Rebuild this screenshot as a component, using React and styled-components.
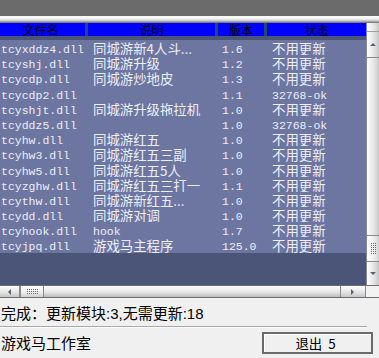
import React from 'react';
import styled, { createGlobalStyle } from 'styled-components';

const GlobalStyle = createGlobalStyle`
  html, body {
    margin: 0;
    padding: 0;
    background: #f0f0f0;
  }
  body {
    font-family: "Liberation Sans", "Noto Sans CJK SC", sans-serif;
  }
`;

const rows = [
  ['tcyxddz4.dll', '同城游新4人斗...', '1.6', '不用更新'],
  ['tcyshj.dll', '同城游升级', '1.2', '不用更新'],
  ['tcycdp.dll', '同城游炒地皮', '1.3', '不用更新'],
  ['tcycdp2.dll', '', '1.1', '32768-ok'],
  ['tcyshjt.dll', '同城游升级拖拉机', '1.0', '不用更新'],
  ['tcyddz5.dll', '', '1.0', '32768-ok'],
  ['tcyhw.dll', '同城游红五', '1.0', '不用更新'],
  ['tcyhw3.dll', '同城游红五三副', '1.0', '不用更新'],
  ['tcyhw5.dll', '同城游红五5人', '1.0', '不用更新'],
  ['tcyzghw.dll', '同城游红五三打一', '1.1', '不用更新'],
  ['tcythw.dll', '同城游新红五...', '1.0', '不用更新'],
  ['tcydd.dll', '同城游对调', '1.0', '不用更新'],
  ['tcyhook.dll', 'hook', '1.7', '不用更新'],
  ['tcyjpq.dll', '游戏马主程序', '125.0', '不用更新'],
];

const isCjk = (s) => /[\u4e00-\u9fff]/.test(s);

const COLUMNS = '85px 130px 49px 1fr';

const Window = styled.div`
  width: 379px;
  height: 358px;
  display: flex;
  flex-direction: column;
  background: #f0f0f0;
  overflow: hidden;
`;

const TopBand = styled.div`
  flex: none;
  height: 16px;
  background: #6b6b6b;
`;

const TopEdge = styled.div`
  flex: none;
  height: 7px;
  background: linear-gradient(#fafafa 0, #f2f2f2 3px, #d4d4d4 4px, #c4c4c4 5px, #8c8c8c 6px, #6e6e6e 7px);
`;

const ListFrame = styled.div`
  flex: none;
  height: 262px;
  display: flex;
`;

const ListView = styled.div`
  flex: 1;
  display: flex;
  flex-direction: column;
  background: #4b5578;
  overflow: hidden;
`;

const Header = styled.div`
  flex: none;
  height: 13px;
  display: grid;
  grid-template-columns: ${COLUMNS};
  background: #0000ff;
  margin-bottom: 4px;
`;

const HeadCell = styled.div`
  display: flex;
  align-items: center;
  justify-content: center;
  height: 13px;
  font-family: "Noto Sans CJK SC", sans-serif;
  font-size: 12px;
  line-height: 13px;
  color: #000;
  border-left: ${(p) => (p.$first ? 'none' : '3px solid #1d4a70')};
  box-sizing: border-box;
  padding-right: ${(p) => (p.$first ? '4px' : '0')};
`;

const Rows = styled.div`
  display: flex;
  flex-direction: column;
  background: #6d75a1;
  color: #eceff8;
`;

const Row = styled.div`
  height: 15.2px;
  display: grid;
  grid-template-columns: ${COLUMNS};
`;

const Cell = styled.div`
  padding: 1px 0 0 ${(p) => p.$pad}px;
  overflow: hidden;
  white-space: nowrap;
  line-height: 14.2px;
  height: 15.2px;
  box-sizing: border-box;
`;

const Text = styled.span`
  font-family: ${(p) => (p.$cjk ? '"Noto Sans CJK SC", sans-serif' : '"Liberation Mono", monospace')};
  font-size: ${(p) => (p.$cjk ? '13.4px' : '11.5px')};
`;

const VScroll = styled.div`
  flex: none;
  width: 13px;
  display: flex;
  flex-direction: column;
  background: linear-gradient(to right, #fdfdfd, #e4e4e4 60%, #c8c8c8);
  border-left: 1px solid #8a8a8a;
  box-sizing: border-box;
`;

const ScrollCap = styled.div`
  flex: none;
  height: 8px;
  border-bottom: 1px solid #a0a0a0;
`;

const ScrollButton = styled.div`
  flex: none;
  display: flex;
  align-items: center;
  justify-content: center;
  width: ${(p) => (p.$w ? `${p.$w}px` : 'auto')};
  height: ${(p) => (p.$h ? `${p.$h}px` : 'auto')};
  box-sizing: border-box;
  background: ${(p) =>
    p.$horizontal
      ? 'linear-gradient(#ffffff, #e2e2e2 60%, #c6c6c6)'
      : 'linear-gradient(to right, #ffffff, #e2e2e2 60%, #c6c6c6)'};
  border-color: #8a8a8a;
  border-style: solid;
  border-width: ${(p) => p.$borders || '0'};
`;

const Track = styled.div`
  flex: 1;
  display: flex;
  flex-direction: ${(p) => (p.$horizontal ? 'row' : 'column')};
  justify-content: ${(p) => (p.$horizontal ? 'flex-start' : 'flex-end')};
`;

const Thumb = styled.div`
  flex: none;
  display: flex;
  align-items: center;
  justify-content: center;
  width: ${(p) => (p.$horizontal ? '24px' : 'auto')};
  height: ${(p) => (p.$horizontal ? 'auto' : '26px')};
  box-sizing: border-box;
  border-color: #8a8a8a;
  border-style: solid;
  border-width: ${(p) => (p.$horizontal ? '0 1px' : '1px 0 0')};
  background: ${(p) =>
    p.$horizontal
      ? 'linear-gradient(#ffffff, #ececec 60%, #d0d0d0)'
      : 'linear-gradient(to right, #ffffff, #ececec 60%, #d0d0d0)'};
`;

const HScroll = styled.div`
  flex: none;
  height: 13px;
  display: flex;
  box-sizing: border-box;
  border-top: 1px solid #6e6e6e;
  border-bottom: 1px solid #6e6e6e;
  background: linear-gradient(#fdfdfd, #e6e6e6 55%, #bdbdbd);
`;

const Corner = styled.div`
  flex: none;
  width: 13px;
  border-left: 1px solid #8a8a8a;
  background: #f2f2f2;
`;

const StatusLine = styled.div`
  flex: none;
  height: 28px;
  display: flex;
  align-items: center;
  padding-left: 1px;
  font-size: 15px;
  color: #000;
  white-space: pre;
`;

const Divider = styled.div`
  flex: none;
  width: 367px;
  height: 1px;
  background: #a9a9a9;
  border-bottom: 1px solid #ffffff;
`;

const Footer = styled.div`
  flex: 1;
  display: flex;
  align-items: center;
  justify-content: space-between;
  padding: 0 6px 1px 1px;
`;

const Studio = styled.div`
  font-family: "Noto Sans CJK SC", sans-serif;
  font-size: 15px;
  color: #000;
`;

const ExitButton = styled.button`
  width: 111px;
  height: 22px;
  box-sizing: border-box;
  border: 2px solid #6a6a6a;
  box-shadow: inset 1px 1px 0 #ffffff;
  background: #f0f0f0;
  font-family: "Noto Sans CJK SC", sans-serif;
  font-size: 13.4px;
  color: #000;
  padding: 0 4px 0 0;
  display: flex;
  align-items: center;
  justify-content: center;
  white-space: pre;
`;

const Arrow = ({ dir }) => {
  const pts = {
    up: '0,4 3,1 6,4',
    down: '0,1 3,4 6,1',
    left: '4,0 1,3 4,6',
    right: '1,0 4,3 1,6',
  }[dir];
  return (
    <svg width="6" height="6" viewBox="0 0 6 6">
      <polygon points={pts} fill="#5a6270" />
    </svg>
  );
};

const Grip = ({ horizontal }) => (
  <svg width={horizontal ? 13 : 5} height={horizontal ? 5 : 13}>
    {Array.from({ length: 6 }).map((_, i) =>
      [0, 2, 4].map((j) =>
        horizontal ? (
          <rect key={`${i}-${j}`} x={i * 2 + 1} y={j} width="1" height="1" fill="#6a6a6a" />
        ) : (
          <rect key={`${i}-${j}`} x={j} y={i * 2 + 1} width="1" height="1" fill="#6a6a6a" />
        ),
      ),
    )}
  </svg>
);

export default function App() {
  return (
    <>
      <GlobalStyle />
      <Window>
        <TopBand />
        <TopEdge />
        <ListFrame>
          <ListView>
            <Header>
              <HeadCell $first>文件名</HeadCell>
              <HeadCell>说明</HeadCell>
              <HeadCell>版本</HeadCell>
              <HeadCell>状态</HeadCell>
            </Header>
            <Rows>
              {rows.map(([file, desc, ver, status]) => (
                <Row key={file}>
                  <Cell $pad={1}>
                    <Text>{file}</Text>
                  </Cell>
                  <Cell $pad={8}>
                    <Text $cjk={isCjk(desc)}>{desc}</Text>
                  </Cell>
                  <Cell $pad={7}>
                    <Text>{ver}</Text>
                  </Cell>
                  <Cell $pad={8}>
                    <Text $cjk={isCjk(status)}>{status}</Text>
                  </Cell>
                </Row>
              ))}
            </Rows>
          </ListView>
          <VScroll>
            <ScrollCap />
            <ScrollButton $h={26} $borders="0 0 1px">
              <Arrow dir="up" />
            </ScrollButton>
            <Track>
              <Thumb>
                <Grip />
              </Thumb>
            </Track>
            <ScrollButton $h={24} $borders="1px 0 0">
              <Arrow dir="down" />
            </ScrollButton>
          </VScroll>
        </ListFrame>
        <HScroll>
          <ScrollButton $horizontal $w={20} $borders="0 1px 0 0">
            <Arrow dir="left" />
          </ScrollButton>
          <Track $horizontal>
            <Thumb $horizontal>
              <Grip horizontal />
            </Thumb>
          </Track>
          <ScrollButton $horizontal $w={25} $borders="0 0 0 1px">
            <Arrow dir="right" />
          </ScrollButton>
          <Corner />
        </HScroll>
        <StatusLine>完成：更新模块:3,无需更新:18</StatusLine>
        <Divider />
        <Footer>
          <Studio>游戏马工作室</Studio>
          <ExitButton>退出  5</ExitButton>
        </Footer>
      </Window>
    </>
  );
}
